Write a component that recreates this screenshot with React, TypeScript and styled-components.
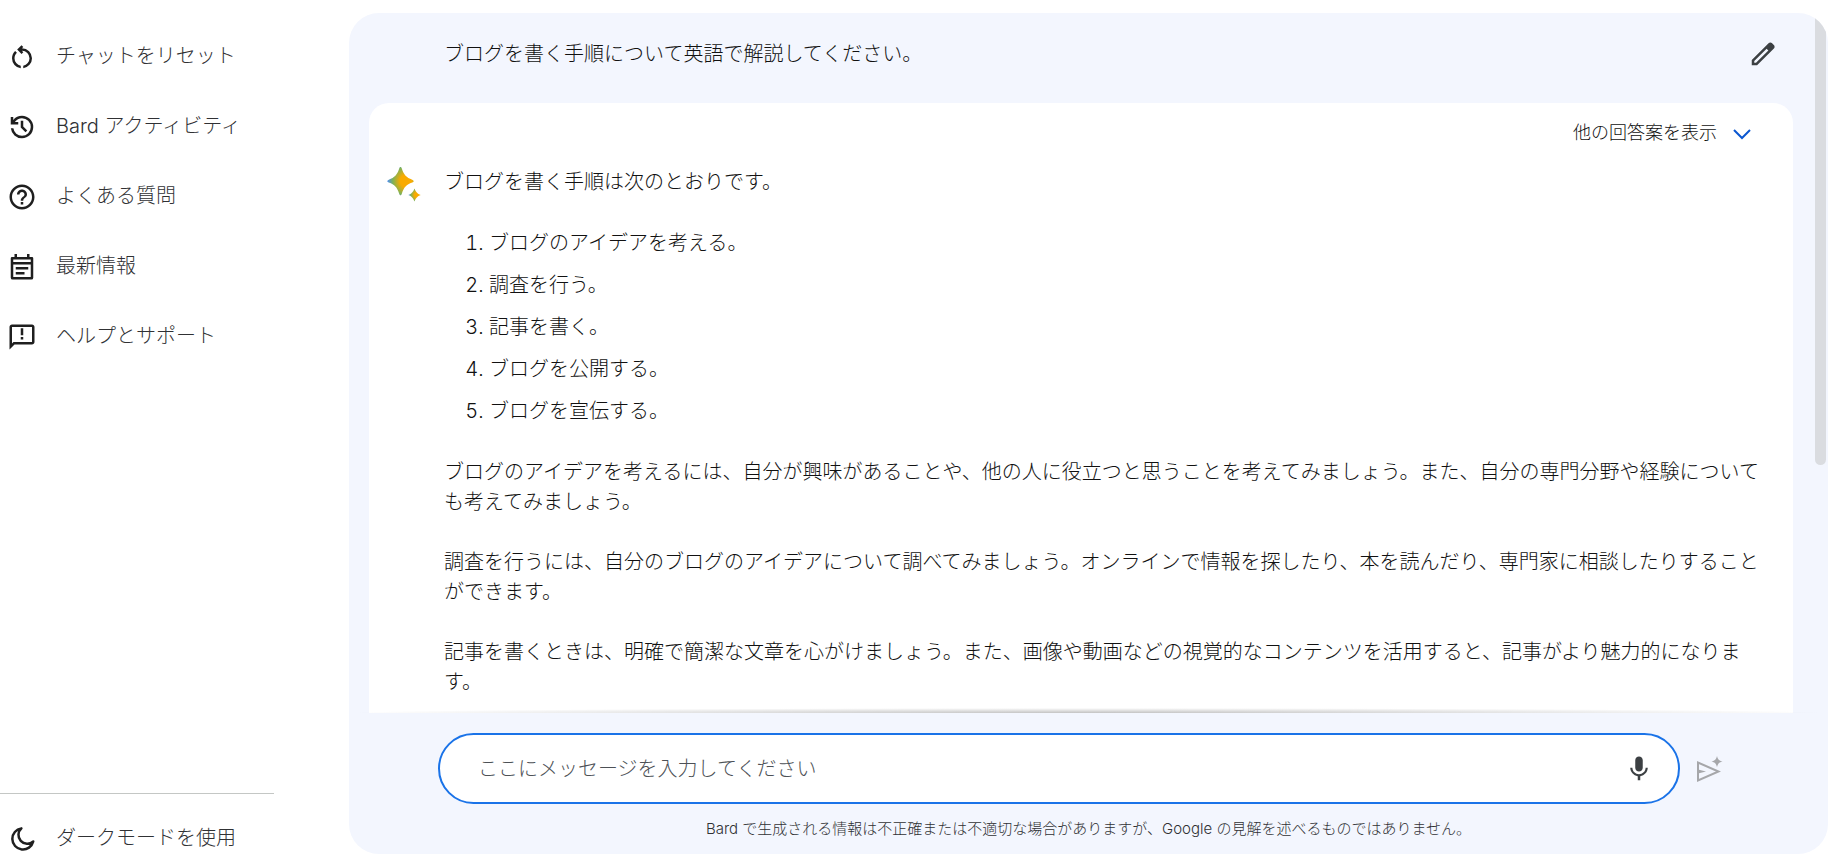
import React from "react";
import styled, { createGlobalStyle } from "styled-components";
import { MdHelpOutline, MdMic } from "react-icons/md";

const GlobalStyle = createGlobalStyle`
  * { box-sizing: border-box; }
  body {
    margin: 0;
    background: #fff;
    color: #111;
    font-family: Inter, "Noto Sans CJK JP", sans-serif;
    font-size: 20px;
    font-weight: 300;
    line-height: 30px;
  }
  button, input { font: inherit; color: inherit; }
  p, ol { margin: 0; }
`;

const Page = styled.div`
  display: flex;
  min-height: 100vh;
`;

const Sidebar = styled.nav`
  display: flex;
  flex-direction: column;
  justify-content: space-between;
  flex: 0 0 274px;
  padding-top: 21px;
`;

const NavFooter = styled.div`
  height: 73px;
  padding-top: 9px;
  border-top: 1px solid #c4c7c5;
`;

const NavItem = styled.button`
  display: flex;
  align-items: center;
  gap: 19px;
  width: 100%;
  height: 70px;
  padding: 0 0 0 7px;
  border: 0;
  background: none;
  color: #303134;
  text-align: left;
  cursor: pointer;

  svg {
    flex: none;
    width: 30px;
    height: 30px;
    margin-top: 2px;
    color: #1f1f1f;
  }
`;

const Panel = styled.main`
  position: relative;
  display: flex;
  flex: 1;
  flex-direction: column;
  min-width: 0;
  margin: 13px 18px 12px 75px;
  overflow: hidden;
  border-radius: 30px;
  background: #f3f6fe;
`;

const Conversation = styled.section`
  position: relative;
  display: flex;
  flex: 1;
  flex-direction: column;
  padding: 0 35px 0 20px;

  &::after {
    content: "";
    position: absolute;
    left: 0;
    right: 0;
    bottom: 0;
    height: 5px;
    background: radial-gradient(50% 100% at 50% 100%, rgba(0, 0, 0, 0.24), transparent);
  }
`;

const ScrollThumb = styled.div`
  position: absolute;
  top: 0;
  right: 2px;
  width: 11px;
  height: 452px;
  border-radius: 0 0 6px 6px;
  background: #dadce0;
`;

const Query = styled.div`
  display: flex;
  align-items: center;
  justify-content: space-between;
  height: 90px;
  padding: 0 15px 9px 75px;
`;

const IconButton = styled.button<{ $color?: string }>`
  display: flex;
  flex: none;
  padding: 0;
  border: 0;
  background: none;
  color: ${({ $color }) => $color ?? "#3c4043"};
  cursor: pointer;

  svg {
    width: 30px;
    height: 30px;
  }
`;

const AnswerCard = styled.article`
  flex: 1;
  padding: 15px 20px 10px 75px;
  border-radius: 20px 20px 0 0;
  background: #fff;
`;

const DraftsRow = styled.div`
  display: flex;
  justify-content: flex-end;
  padding-right: 16px;
`;

const DraftsButton = styled.button`
  display: flex;
  align-items: center;
  gap: 10px;
  padding: 0;
  border: 0;
  background: none;
  font-size: 18px;
  cursor: pointer;

  svg {
    width: 30px;
    height: 30px;
    color: #0b57d0;
  }
`;

const AnswerHead = styled.div`
  display: flex;
  align-items: flex-start;
  gap: 22px;
  margin: 19px 0 0 -58px;

  svg {
    flex: none;
    width: 36px;
    height: 36px;
  }
`;

const Steps = styled.ol`
  display: flex;
  flex-direction: column;
  gap: 12px;
  margin: 25px 0 31px;
  padding-left: 45px;
`;

const Paragraph = styled.p`
  & + & {
    margin-top: 30px;
  }
`;

const Composer = styled.form`
  display: flex;
  align-items: center;
  gap: 16px;
  padding: 20px 102px 0 89px;
`;

const InputBox = styled.label`
  display: flex;
  flex: 1;
  align-items: center;
  height: 71px;
  padding: 0 24px 0 38px;
  border: 2px solid #1a73e8;
  border-radius: 36px;
  background: #fff;
`;

const MessageInput = styled.input`
  flex: 1;
  min-width: 0;
  padding: 0;
  border: 0;
  outline: 0;
  background: none;

  &::placeholder {
    color: #4d5156;
    opacity: 1;
  }
`;

const Disclaimer = styled.p`
  padding: 10px 0;
  color: #303134;
  font-size: 15px;
  text-align: center;
`;

const ResetIcon = () => (
  <svg viewBox="0 0 24 24" fill="currentColor" aria-hidden="true">
    <path d="M11 20.950q-3.025-.375-5.013-2.638T4 13q0-1.650.650-3.163T6.500 7.200l1.425 1.425q-.950.850-1.437 1.975T6 13q0 2.200 1.400 3.888T11 18.950v2Zm2 0v-2q2.175-.4 3.588-2.075T18 13q0-2.500-1.750-4.250T12 7h-.075l1.100 1.100-1.400 1.400-3.500-3.500 3.500-3.500 1.400 1.400-1.100 1.100H12q3.350 0 5.675 2.325T20 13q0 3.025-1.988 5.288T13 20.950Z" />
  </svg>
);

const HistoryIcon = () => (
  <svg viewBox="0 -960 960 960" fill="currentColor" aria-hidden="true">
    <path d="M480-120q-138 0-240.500-91.500T122-440h82q14 104 92.500 172T480-200q117 0 198.500-81.500T760-480q0-117-81.500-198.500T480-760q-69 0-129 32t-101 88h110v80H120v-240h80v94q51-64 124.500-99T480-840q75 0 140.500 28.500t114 77q48.500 48.500 77 114T840-480q0 75-28.500 140.500t-77 114q-48.500 48.500-114 77T480-120Zm112-192L440-464v-216h80v184l128 128-56 56Z" />
  </svg>
);

const NewsIcon = () => (
  <svg viewBox="0 0 24 24" fill="none" stroke="currentColor" strokeWidth="2" aria-hidden="true">
    <path d="M4 9h16M7 13h10M7 17h7" />
    <path d="M4 5h16v15.500a.5.5 0 0 1-.5.5h-15a.5.5 0 0 1-.5-.5z" strokeLinejoin="round" />
    <path d="M7 1.500V5M17 1.500V5" />
  </svg>
);

const FeedbackIcon = () => (
  <svg viewBox="0 0 24 24" fill="currentColor" aria-hidden="true">
    <path d="M20 2H4c-1.100 0-2 .9-2 2v18l4-4h14c1.100 0 2-.9 2-2V4c0-1.100-.9-2-2-2zm0 14H5.170L4 17.170V4h16v12zM11 12h2v2h-2zM11 5h2v5.500h-2z" />
  </svg>
);

const MoonIcon = () => (
  <svg viewBox="0 0 24 24" fill="none" stroke="currentColor" strokeWidth="2" strokeLinejoin="round" aria-hidden="true">
    <path d="M11.500 3.500A8.500 8.500 0 1 0 21 14A6.600 6.600 0 0 1 11.500 3.500Z" />
  </svg>
);

const PencilIcon = () => (
  <svg viewBox="0 0 24 24" fill="currentColor" aria-hidden="true">
    <path d="M5 19h1.400l9.900-9.900-1.400-1.400L5 17.600ZM7.250 21H3v-4.250L16.450 3.325q.575-.575 1.413-.575t1.412.575l1.400 1.400q.575.575.6 1.388t-.55 1.387Z" fillRule="evenodd" />
  </svg>
);

const ChevronIcon = () => (
  <svg viewBox="0 0 30 30" fill="none" stroke="currentColor" strokeWidth="2" aria-hidden="true">
    <path d="M7 12l8 8 8-8" />
  </svg>
);

const SparkleIcon = () => (
  <svg viewBox="0 0 36 36" aria-hidden="true">
    <defs>
      <radialGradient id="bard" cx="0.700" cy="0.500" r="0.700">
        <stop offset="0.300" stopColor="#f9ab00" />
        <stop offset="0.700" stopColor="#7fb256" />
        <stop offset="1" stopColor="#4c8df6" />
      </radialGradient>
    </defs>
    <path fill="url(#bard)" d="M14.500 0c.8 0 1 .6 1.400 1.800 2 6.200 4.400 8.700 10.300 10.900 2 .7 2 2.100 0 2.800-5.900 2.200-8.300 4.700-10.300 10.900-.4 1.200-.6 1.800-1.400 1.800s-1-.6-1.400-1.800C11.100 20.200 8.700 17.700 2.800 15.500c-2-.7-2-2.100 0-2.800C8.700 10.500 11.100 8 13.100 1.800 13.500.6 13.700 0 14.500 0Z" />
    <path fill="url(#bard)" d="M28.500 21.500c1.500 3.700 2.700 5.100 6.200 6.500-3.500 1.400-4.700 2.800-6.200 6.500-1.500-3.700-2.700-5.100-6.200-6.500 3.500-1.400 4.700-2.800 6.200-6.500Z" />
  </svg>
);

const SendIcon = () => (
  <svg viewBox="0 0 30 30" fill="none" aria-hidden="true">
    <path d="M2 8.500V26.500L22.500 17.500Z" stroke="currentColor" strokeWidth="2" />
    <path d="M2 15.500L10 17.500 2 19.500Z" fill="currentColor" />
    <path d="M21 2c.9 3.500 2 4.700 5.500 5.500-3.500.8-4.600 2-5.500 5.500-.9-3.500-2-4.700-5.500-5.500C19 6.700 20.100 5.500 21 2Z" fill="currentColor" />
  </svg>
);

const navItems = [
  { label: "チャットをリセット", icon: <ResetIcon /> },
  { label: "Bard アクティビティ", icon: <HistoryIcon /> },
  { label: "よくある質問", icon: <MdHelpOutline /> },
  { label: "最新情報", icon: <NewsIcon /> },
  { label: "ヘルプとサポート", icon: <FeedbackIcon /> },
];

const steps = [
  "ブログのアイデアを考える。",
  "調査を行う。",
  "記事を書く。",
  "ブログを公開する。",
  "ブログを宣伝する。",
];

const paragraphs = [
  "ブログのアイデアを考えるには、自分が興味があることや、他の人に役立つと思うことを考えてみましょう。また、自分の専門分野や経験についても考えてみましょう。",
  "調査を行うには、自分のブログのアイデアについて調べてみましょう。オンラインで情報を探したり、本を読んだり、専門家に相談したりすることができます。",
  "記事を書くときは、明確で簡潔な文章を心がけましょう。また、画像や動画などの視覚的なコンテンツを活用すると、記事がより魅力的になります。",
];

export default function App() {
  return (
    <>
      <GlobalStyle />
      <Page lang="ja">
        <Sidebar>
          <div>
            {navItems.map((item) => (
              <NavItem key={item.label} type="button">
                {item.icon}
                {item.label}
              </NavItem>
            ))}
          </div>
          <NavFooter>
            <NavItem type="button">
              <MoonIcon />
              ダークモードを使用
            </NavItem>
          </NavFooter>
        </Sidebar>
        <Panel>
          <Conversation>
            <Query>
              <p>ブログを書く手順について英語で解説してください。</p>
              <IconButton type="button" aria-label="編集">
                <PencilIcon />
              </IconButton>
            </Query>
            <AnswerCard>
              <DraftsRow>
                <DraftsButton type="button">
                  他の回答案を表示
                  <ChevronIcon />
                </DraftsButton>
              </DraftsRow>
              <AnswerHead>
                <SparkleIcon />
                <p>ブログを書く手順は次のとおりです。</p>
              </AnswerHead>
              <Steps>
                {steps.map((step) => (
                  <li key={step}>{step}</li>
                ))}
              </Steps>
              {paragraphs.map((text) => (
                <Paragraph key={text}>{text}</Paragraph>
              ))}
            </AnswerCard>
          </Conversation>
          <Composer onSubmit={(event) => event.preventDefault()}>
            <InputBox>
              <MessageInput
                type="text"
                placeholder="ここにメッセージを入力してください"
                aria-label="ここにメッセージを入力してください"
              />
              <IconButton type="button" aria-label="マイク">
                <MdMic />
              </IconButton>
            </InputBox>
            <IconButton type="submit" aria-label="送信" $color="#a6a7aa">
              <SendIcon />
            </IconButton>
          </Composer>
          <Disclaimer>
            Bard で生成される情報は不正確または不適切な場合がありますが、Google の見解を述べるものではありません。
          </Disclaimer>
          <ScrollThumb />
        </Panel>
      </Page>
    </>
  );
}
